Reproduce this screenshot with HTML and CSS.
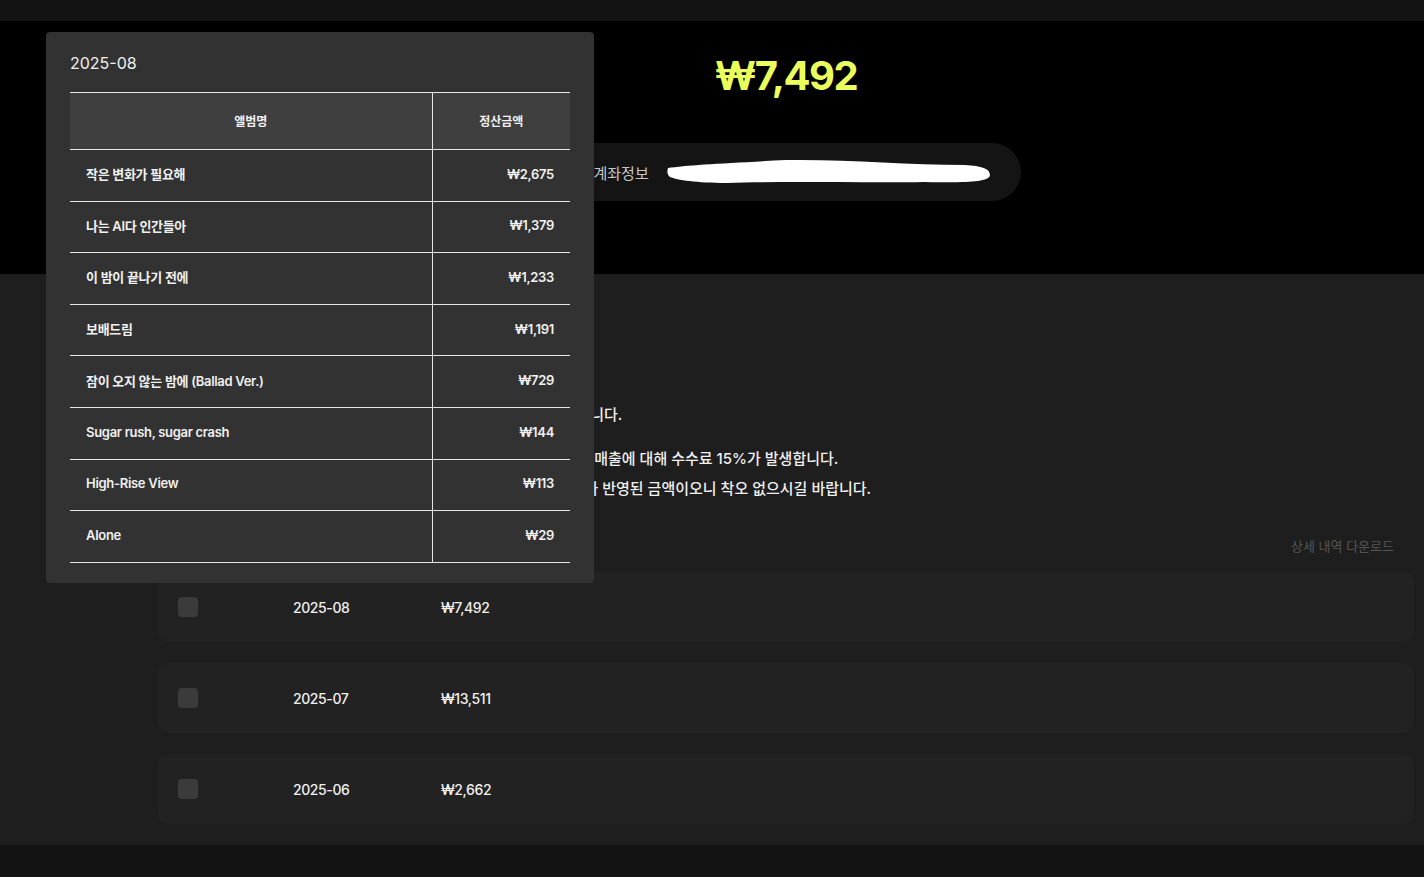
FILE: index.html
```html
<!DOCTYPE html>
<html lang="ko">
<head>
  <meta charset="UTF-8">
  <meta name="viewport" content="width=device-width, initial-scale=1.0">
  <title>정산 내역</title>
  <link rel="stylesheet" href="styles.css">
</head>
<body>
  <div class="topbar"></div>

  <section class="hero">
    <div class="wrap hero-inner">
      <div class="total">₩7,492</div>
      <div class="account">
        <span class="account-label">계좌정보</span>
        <svg class="account-mask" width="326" height="26" viewBox="0 0 326 26">
          <path d="M1 9 C20 6 60 4 120 1 C180 0 240 6 300 6 C318 7 326 10 325 17 C323 23 300 24 260 23 C200 24 120 22 60 24 C30 24 10 21 3 18 C0 16 0 12 1 9 Z" fill="#fff"/>
        </svg>
      </div>
    </div>
  </section>

  <section class="content">
    <div class="wrap">
      <h2 class="title">정산 내역</h2>
      <p class="notice">정산금액은 매월 말일 기준으로 집계되어 익월에 등록된 계좌로 입금됩니다.</p>
      <div class="notes">
        <p>정산금액은 국내외 음원 유통 플랫폼에서 스트리밍 및 다운로드 발생한 매출에 대해 수수료 15%가 발생합니다.</p>
        <p>아래 표시된 월별 최종 정산금액은 각 플랫폼 수수료 및 유통사 수수료가 반영된 금액이오니 착오 없으시길 바랍니다.</p>
      </div>

      <div class="toolbar">
        <a class="download" href="#">상세 내역 다운로드</a>
      </div>

      <div class="rows">
        <div class="row">
          <span class="check"></span>
          <span class="month">2025-08</span>
          <span class="amount">₩7,492</span>
        </div>
        <div class="row">
          <span class="check"></span>
          <span class="month">2025-07</span>
          <span class="amount">₩13,511</span>
        </div>
        <div class="row">
          <span class="check"></span>
          <span class="month">2025-06</span>
          <span class="amount">₩2,662</span>
        </div>
      </div>
    </div>
  </section>

  <div class="footer"></div>

  <div class="popover">
    <div class="popover-title">2025-08</div>
    <table class="detail">
      <thead>
        <tr>
          <th>앨범명</th>
          <th>정산금액</th>
        </tr>
      </thead>
      <tbody>
        <tr><td>작은 변화가 필요해</td><td class="num">₩2,675</td></tr>
        <tr><td>나는 AI다 인간들아</td><td class="num">₩1,379</td></tr>
        <tr><td>이 밤이 끝나기 전에</td><td class="num">₩1,233</td></tr>
        <tr><td>보배드림</td><td class="num">₩1,191</td></tr>
        <tr><td>잠이 오지 않는 밤에 (Ballad Ver.)</td><td class="num">₩729</td></tr>
        <tr><td>Sugar rush, sugar crash</td><td class="num">₩144</td></tr>
        <tr><td>High-Rise View</td><td class="num">₩113</td></tr>
        <tr><td>Alone</td><td class="num">₩29</td></tr>
      </tbody>
    </table>
  </div>
</body>
</html>
```

FILE: styles.css
```css
:root {
  --bar-bg: #131313;
  --hero-bg: #000;
  --section-bg: #1e1e1e;
  --row-bg: #222;
  --check-bg: #3b3b3b;
  --popover-bg: #323232;
  --head-bg: #3f3f3f;
  --text: #f0f0f0;
  --muted: #555;
  --accent: #eaff5c;
}

* {
  box-sizing: border-box;
}

body {
  margin: 0;
  font-family: Inter, "Noto Sans CJK KR", sans-serif;
  color: var(--text);
  background: var(--bar-bg);
}

.topbar {
  height: 21px;
  background: var(--bar-bg);
}

.footer {
  height: 32px;
  background: var(--bar-bg);
}

.wrap {
  margin: 0 10px 0 158px;
}

/* hero */
.hero {
  background: var(--hero-bg);
  height: 253px;
  padding-top: 31px;
}

.hero-inner {
  display: flex;
  flex-direction: column;
  align-items: center;
}

.total {
  font-size: 40px;
  line-height: 48px;
  font-weight: 700;
  letter-spacing: -1.5px;
  color: var(--accent);
}

.account {
  margin-top: 43px;
  width: 469px;
  height: 58px;
  border-radius: 29px;
  background: #141414;
  display: flex;
  align-items: center;
  gap: 18px;
  padding: 0 30px 0 42px;
}

.account-label {
  font-size: 15px;
  color: #c8c8c8;
  white-space: nowrap;
}

.account-mask {
  display: block;
}

/* content */
.content {
  background: var(--section-bg);
  padding: 48px 0 21px;
}

.title {
  margin: 0 0 48px;
  font-size: 22px;
  line-height: 30px;
  font-weight: 700;
}

.notice,
.notes p {
  margin: 0;
  font-size: 15px;
  line-height: 30px;
  font-weight: 500;
  white-space: nowrap;
}

.notes {
  margin-top: 14px;
}

.toolbar {
  display: flex;
  justify-content: flex-end;
  margin-top: 32px;
  padding-right: 20px;
}

.download {
  font-size: 13px;
  line-height: 20px;
  color: var(--muted);
  text-decoration: none;
}

.rows {
  margin-top: 16px;
  display: flex;
  flex-direction: column;
  gap: 21px;
}

.row {
  height: 70px;
  background: var(--row-bg);
  border-radius: 10px;
  display: flex;
  align-items: center;
  padding-left: 20px;
  font-size: 14px;
  font-weight: 500;
  letter-spacing: -0.4px;
}

.check {
  width: 20px;
  height: 20px;
  border-radius: 4px;
  background: var(--check-bg);
  margin-right: 95px;
}

.month {
  width: 148px;
}

/* popover */
.popover {
  position: absolute;
  left: 46px;
  top: 32px;
  width: 548px;
  background: var(--popover-bg);
  border-radius: 4px;
  padding: 20px 24px;
}

.popover-title {
  font-size: 16px;
  line-height: 22px;
  margin-bottom: 18px;
}

.detail {
  width: 100%;
  border-collapse: collapse;
  font-size: 13px;
  font-weight: 600;
}

.detail th,
.detail td {
  border-top: 1px solid #e6e6e6;
  border-bottom: 1px solid #e6e6e6;
}

.detail th + th,
.detail td + td {
  border-left: 1px solid #e6e6e6;
}

.detail th {
  height: 57px;
  padding-bottom: 3px;
  background: var(--head-bg);
  font-size: 12px;
  font-weight: 700;
}

.detail th:first-child {
  width: 362px;
}

.detail td {
  height: 51.6px;
  padding: 0 16px 3px;
  letter-spacing: -0.3px;
}

.detail .num {
  text-align: right;
}
```
